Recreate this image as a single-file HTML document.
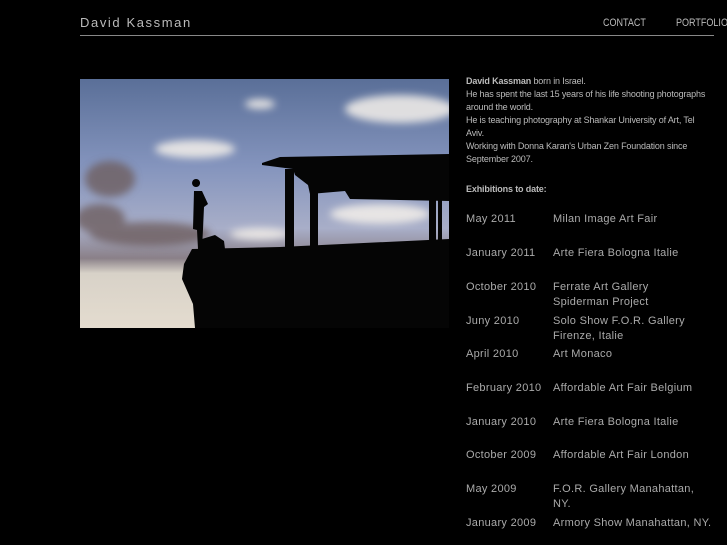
<!DOCTYPE html>
<html><head><style>
body{margin:0;background:#000;width:727px;height:545px;overflow:hidden;position:relative;font-family:"Liberation Sans",sans-serif}
.a{position:absolute;white-space:nowrap}
.h{color:#bbb;font-size:13px;letter-spacing:1.6px;left:80px;top:15px}
.nav{color:#bbb;font-size:11px;top:17px;transform:scaleX(.82);transform-origin:left}
.line{position:absolute;left:80px;top:35px;width:634px;height:1px;background:#888}
.bio{position:absolute;left:466px;top:75px;color:#bbb;font-size:9px;line-height:13px;width:248px;letter-spacing:-.15px}
.d{color:#aaa;font-size:11px;line-height:15px;letter-spacing:.3px;left:466px}
.e{color:#aaa;font-size:11px;line-height:15px;letter-spacing:.3px;left:553px}
</style></head><body>
<div class="a h">David Kassman</div>
<div class="a nav" style="left:603px">CONTACT</div>
<div class="a nav" style="left:676px">PORTFOLIO</div>
<div class="line"></div>
<svg style="position:absolute;left:80px;top:79px" width="369" height="249" viewBox="0 0 369 249">
<defs>
<linearGradient id="s" x1="0" y1="0" x2="0" y2="1">
<stop offset="0" stop-color="#5a6f98"/><stop offset=".35" stop-color="#8494bd"/><stop offset=".6" stop-color="#a8aec8"/><stop offset=".72" stop-color="#8a8088"/><stop offset=".78" stop-color="#d8d2c8"/><stop offset="1" stop-color="#e4dccf"/>
</linearGradient>
<filter id="b"><feGaussianBlur stdDeviation="4"/></filter>
</defs>
<rect width="369" height="249" fill="url(#s)"/>
<g filter="url(#b)" fill="#f4f0ea" opacity=".85">
<ellipse cx="320" cy="30" rx="55" ry="14"/>
<ellipse cx="115" cy="70" rx="40" ry="9"/>
<ellipse cx="180" cy="25" rx="15" ry="5"/>
<ellipse cx="300" cy="135" rx="50" ry="10"/>
<ellipse cx="180" cy="155" rx="30" ry="6"/>
</g>
<g filter="url(#b)" fill="#6e5e60" opacity=".8">
<ellipse cx="30" cy="100" rx="25" ry="18"/>
<ellipse cx="70" cy="155" rx="60" ry="12"/>
<ellipse cx="20" cy="140" rx="25" ry="15"/>
</g>
<path fill="#050505" d="M112 170 L200 168 L369 160 L369 249 L115 249 L113 225 L102 200 L104 185 Z"/>
<path fill="#050505" d="M182 84 L200 78 L369 75 L369 122 L270 120 L265 112 L230 115 L228 106 L215 96 L213 90 L182 86 Z"/>
<rect x="205" y="90" width="9" height="80" fill="#050505"/>
<rect x="230" y="108" width="8" height="60" fill="#050505"/>
<rect x="349" y="118" width="7" height="45" fill="#050505"/>
<rect x="358" y="118" width="4" height="45" fill="#050505"/>
<path fill="#050505" d="M116 108 a4 4 0 1 1 .1 0 Z M114 112 L122 112 L128 125 L124 128 L123 150 L122 170 L118 170 L117 151 L113 150 Z"/>
<path fill="#050505" d="M122 160 L135 156 L144 162 L145 170 L122 170 Z"/>
</svg>
<div class="bio"><b>David Kassman</b> born in Israel.<br>He has spent the last 15 years of his life shooting photographs around the world.<br>He is teaching photography at Shankar University of Art, Tel Aviv.<br>Working with Donna Karan's Urban Zen Foundation since September 2007.<br><div style="height:17px"></div><b>Exhibitions to date:</b></div>
<div class="a d" style="top:212px">May 2011</div><div class="a e" style="top:212px">Milan Image Art Fair</div>
<div class="a d" style="top:246px">January 2011</div><div class="a e" style="top:246px">Arte Fiera Bologna Italie</div>
<div class="a d" style="top:280px">October 2010</div><div class="a e" style="top:280px">Ferrate Art Gallery<br>Spiderman Project</div>
<div class="a d" style="top:314px">Juny 2010</div><div class="a e" style="top:314px">Solo Show F.O.R. Gallery<br>Firenze, Italie</div>
<div class="a d" style="top:347px">April 2010</div><div class="a e" style="top:347px">Art Monaco</div>
<div class="a d" style="top:381px">February 2010</div><div class="a e" style="top:381px">Affordable Art Fair Belgium</div>
<div class="a d" style="top:415px">January 2010</div><div class="a e" style="top:415px">Arte Fiera Bologna Italie</div>
<div class="a d" style="top:448px">October 2009</div><div class="a e" style="top:448px">Affordable Art Fair London</div>
<div class="a d" style="top:482px">May 2009</div><div class="a e" style="top:482px">F.O.R. Gallery Manahattan,<br>NY.</div>
<div class="a d" style="top:516px">January 2009</div><div class="a e" style="top:516px">Armory Show Manahattan, NY.</div>
</body></html>
